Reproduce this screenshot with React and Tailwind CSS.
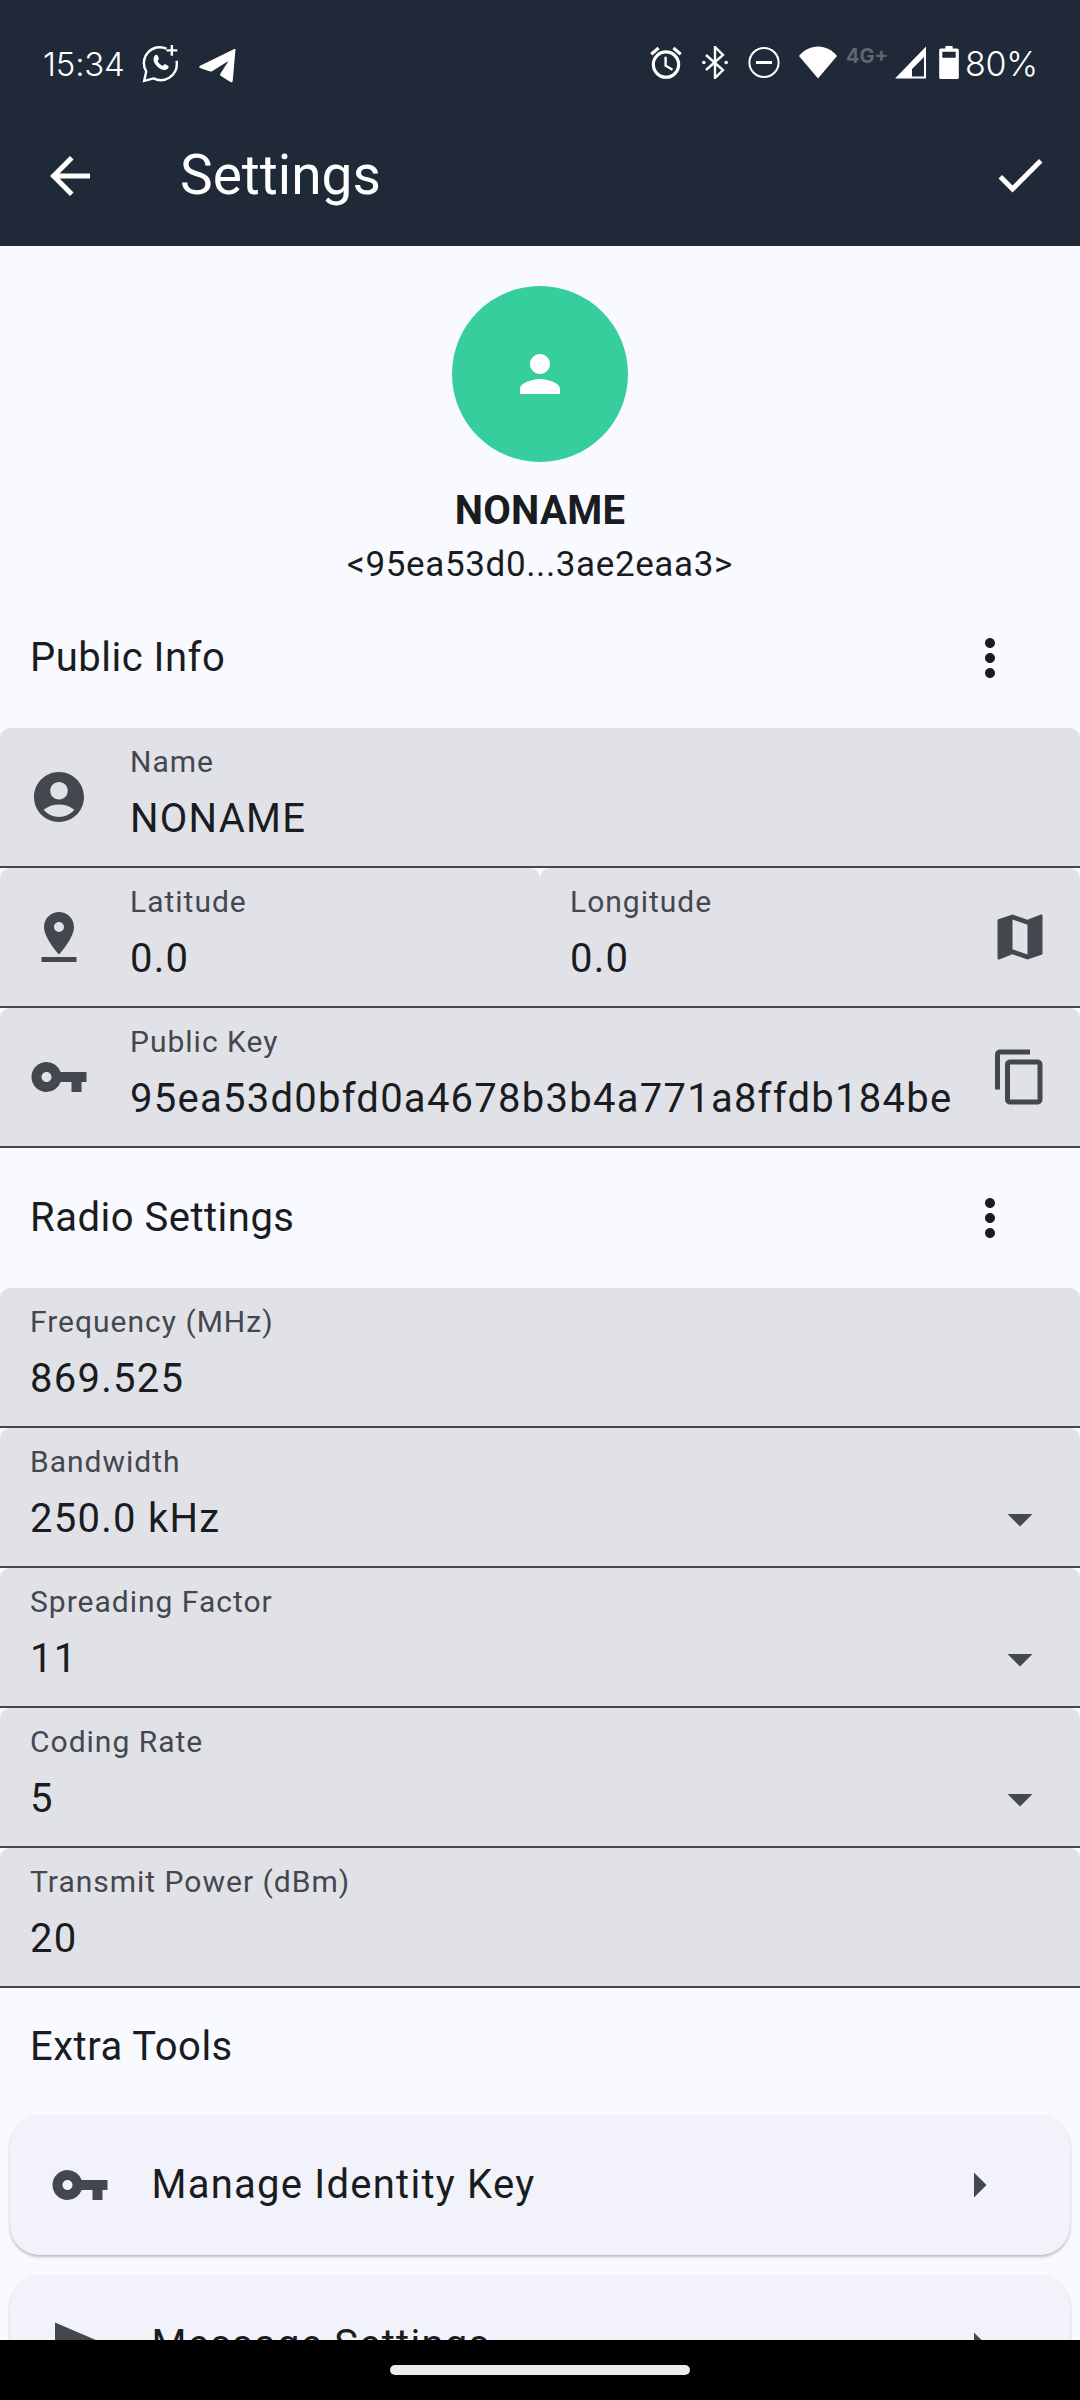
import {
  MdAccountCircle, MdArrowBack, MdArrowDropDown, MdArrowRight, MdCheck, MdContentCopy,
  MdMap, MdMoreVert, MdPerson, MdPinDrop, MdSend, MdVpnKey, MdOutlineAlarm,
} from 'react-icons/md';

const RADIO_FIELDS = [
  { label: 'Frequency (MHz)', value: '869.525' },
  { label: 'Bandwidth', value: '250.0 kHz', dropdown: true },
  { label: 'Spreading Factor', value: '11', dropdown: true },
  { label: 'Coding Rate', value: '5', dropdown: true },
  { label: 'Transmit Power (dBm)', value: '20' },
];

const TOOLS = [
  { label: 'Manage Identity Key', icon: MdVpnKey },
  { label: 'Message Settings', icon: MdSend },
];

function StatusBar() {
  return (
    <div className="h-[106px] flex items-start pt-[46px] text-white font-['Inter',sans-serif]">
      <span className="ml-[43px] w-[81px] text-[33px] leading-[36px] tracking-[-0.2px] font-light whitespace-nowrap">15:34</span>
      {/* WhatsApp with plus */}
      <svg viewBox="0 0 34 35" className="ml-[18px] -mt-[1px] w-[38px] h-[38px]">
        <path d="M22 3.4A14.6 14.6 0 0 0 3.4 24.3L1.5 33l8.6-2.2A14.9 14.9 0 0 0 31.6 17.5c0-1-.1-2-.3-3" fill="none" stroke="white" strokeWidth="2.2" />
        <path d="M11.5 9.5c1-.8 2-.6 2.5.4l1 2.3c.2.6 0 1.100-.9 2.100-.3.400-.2.700 0 1 1 1.700 2.200 2.900 4 3.800.4.200.7.100 1-.2.900-1.100 1.300-1.400 1.900-1.100l2.400 1.200c.8.400.8 1.100.400 2-.9 1.700-3 2.300-5 1.700-4.100-1.200-7.200-4.300-8.400-7.800-.6-2 0-4 1.100-5.400z" fill="white" />
        <path d="M27 0v10M22 5h10" stroke="white" strokeWidth="2.2" />
      </svg>
      {/* Telegram */}
      <svg viewBox="0 0 34 31" className="ml-[19px] mt-[3px] w-[37px] h-[34px]">
        <path d="M33.500 0.500L31 29c-.1 1.300-1 1.800-2.100 1.300l-9-5.800c-.7-.5-.8-1.200-.2-1.800L27 11 12 20.300c-.6.400-1.200.4-1.800.2L1 17.300c-1.100-.4-1.100-1.400 0-2L32 0c1-.4 1.600-.3 1.500.5z" fill="white" />
      </svg>
      <MdOutlineAlarm className="ml-[411px] -mt-[2px] w-[38px] h-[38px]" />
      {/* Bluetooth */}
      <svg viewBox="0 0 26 33" className="ml-[17px] w-[26px] h-[33px]">
        <path d="M4 9l17 15-8 8V1l8 8L4 24" fill="none" stroke="white" strokeWidth="2.400" />
        <circle cx="1.800" cy="16.500" r="1.800" fill="white" />
        <circle cx="24.200" cy="16.500" r="1.800" fill="white" />
      </svg>
      {/* Do not disturb */}
      <svg viewBox="0 0 32 32" className="ml-[20px] w-[32px] h-[33px]">
        <circle cx="16" cy="16" r="14.600" fill="none" stroke="white" strokeWidth="2" />
        <rect x="8" y="14.500" width="16" height="3" fill="white" />
      </svg>
      {/* Wifi */}
      <svg viewBox="0 0 38 32" className="ml-[19px] w-[38px] h-[33px]">
        <path d="M0 9.500C5 3.500 11.500 0 19 0s14 3.500 19 9.500L19 32z" fill="white" />
      </svg>
      <span className="ml-[9px] -mt-[1px] w-[41px] text-[20px] leading-[22px] font-bold text-[#5f6672] whitespace-nowrap">4G+</span>
      {/* Signal */}
      <svg viewBox="0 0 32 32" className="ml-[8px] w-[32px] h-[33px]">
        <path fillRule="evenodd" d="M0 32L31 0v32zM17 30h12V10.500l-12 12z" fill="white" />
      </svg>
      {/* Battery */}
      <svg viewBox="0 0 19 32" className="ml-[12px] w-[20px] h-[33px]">
        <path fillRule="evenodd" d="M6 0h7v2.500h4.500c.8 0 1.500.7 1.500 1.500v26.500c0 .8-.7 1.500-1.500 1.500h-16C.7 32 0 31.300 0 30.500V4c0-.8.7-1.500 1.500-1.500H6zM3 5.500v6h13v-6z" fill="white" />
      </svg>
      <span className="ml-[6px] text-[34px] leading-[36px] font-light tracking-[-0.3px] whitespace-nowrap">80%</span>
    </div>
  );
}

function SectionHeader({ title, menu, className }) {
  return (
    <div className={`flex items-center justify-between pl-[30px] pr-[60px] text-[#191c20] ${className}`}>
      <span className="text-[40px] tracking-[0.5px] leading-[56px]">{title}</span>
      {menu && <MdMoreVert className="w-[60px] h-[60px] text-[#1b1c20]" />}
    </div>
  );
}

function FieldText({ label, value, className = '' }) {
  return (
    <div className={`flex flex-col min-w-0 whitespace-nowrap ${className}`}>
      <span className="mt-[17px] text-[30px] leading-[34px] tracking-[1px] text-[#44474e]">{label}</span>
      <span className="mt-[18.5px] text-[40px] leading-[42px] tracking-[1.25px] text-[#191c20]">{value}</span>
    </div>
  );
}

function Field({ children, className = '' }) {
  return (
    <div className={`h-[140px] bg-[#e1e2e8] rounded-t-[10px] border-b-[2.5px] border-[#44474e] flex ${className}`}>
      {children}
    </div>
  );
}

function PrefixIcon({ icon: Icon }) {
  return (
    <div className="w-[130px] shrink-0 flex items-center pl-[29px]">
      <Icon className="w-[60px] h-[60px] text-[#44474e]" />
    </div>
  );
}

function ToolCard({ label, icon: Icon }) {
  return (
    <div className="mx-[10px] my-[10px] h-[140px] shrink-0 bg-[#f2f3fa] rounded-[30px] shadow-[0_2px_3px_rgba(0,0,0,0.25)] flex items-center pl-[39.5px] pr-[61px]">
      <Icon className="w-[60px] h-[60px] text-[#44474e]" />
      <span className="ml-[42px] flex-1 text-[40px] tracking-[1.25px] text-[#191c20] whitespace-nowrap">{label}</span>
      <MdArrowRight className="w-[60px] h-[60px] text-[#44474e]" />
    </div>
  );
}

export default function App() {
  return (
    <div className="w-[1080px] h-[2400px] flex flex-col overflow-hidden bg-[#f9faff] font-['Roboto',sans-serif]">
      {/* App bar */}
      <header className="h-[246px] shrink-0 bg-[#1f2937] text-white">
        <StatusBar />
        <div className="h-[140px] flex items-center pl-[40px] pr-[30px]">
          <MdArrowBack className="w-[60px] h-[60px]" />
          <span className="ml-[80px] -mt-[3px] flex-1 text-[55px] leading-[64px]">Settings</span>
          <MdCheck className="-mt-[2px] w-[60px] h-[60px]" />
        </div>
      </header>

      <main className="flex-1 min-h-0 overflow-hidden">
        {/* Profile */}
        <div className="flex flex-col items-center pt-[40px] text-[#191c20]">
          <div className="w-[176px] h-[176px] rounded-full bg-[#35ce9c] flex items-center justify-center">
            <MdPerson className="w-[60px] h-[60px] text-white" />
          </div>
          <span className="mt-[21.5px] text-[40px] leading-[54px] font-bold tracking-[0.3px]">NONAME</span>
          <span className="text-[35px] leading-[54px] tracking-[0.625px]">{'<95ea53d0...3ae2eaa3>'}</span>
        </div>

        <SectionHeader title="Public Info" menu className="h-[136.5px] pb-[3px]" />

        <Field>
          <PrefixIcon icon={MdAccountCircle} />
          <FieldText label="Name" value="NONAME" />
        </Field>
        <div className="flex">
          <Field className="w-[540px]">
            <PrefixIcon icon={MdPinDrop} />
            <FieldText label="Latitude" value="0.0" />
          </Field>
          <Field className="flex-1 items-center pl-[30px]">
            <FieldText label="Longitude" value="0.0" className="flex-1 self-start" />
            <MdMap className="mr-[30px] w-[60px] h-[60px] text-[#44474e]" />
          </Field>
        </div>
        <Field className="items-center">
          <PrefixIcon icon={MdVpnKey} />
          <FieldText label="Public Key" value="95ea53d0bfd0a4678b3b4a771a8ffdb184be" className="flex-1 self-start" />
          <MdContentCopy className="mr-[30px] w-[60px] h-[60px] shrink-0 text-[#44474e]" />
        </Field>

        <SectionHeader title="Radio Settings" menu className="h-[140px]" />

        {RADIO_FIELDS.map((f) => (
          <Field key={f.label} className="pl-[30px]">
            <FieldText label={f.label} value={f.value} className="flex-1" />
            {f.dropdown && <MdArrowDropDown className="mt-[61px] mr-[30px] w-[60px] h-[60px] text-[#44474e]" />}
          </Field>
        ))}

        <SectionHeader title="Extra Tools" className="h-[117px]" />

        <div className="flex flex-col">
          {TOOLS.map((t) => (
            <ToolCard key={t.label} label={t.label} icon={t.icon} />
          ))}
        </div>
      </main>

      {/* Gesture bar */}
      <div className="h-[60px] shrink-0 bg-black flex justify-center pt-[25px]">
        <div className="w-[300px] h-[10px] rounded-full bg-[#ebebeb]" />
      </div>
    </div>
  );
}
